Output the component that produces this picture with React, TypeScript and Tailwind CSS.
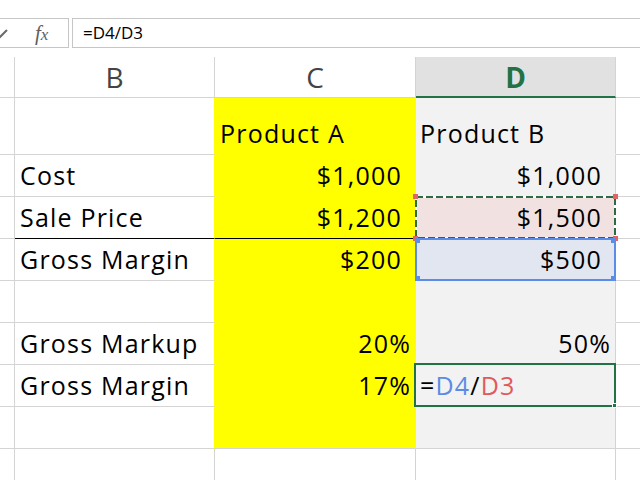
import React from "react";

type Mark = "ants" | "ref" | "active" | undefined;

type Row = {
  h?: string;
  b?: string;
  c?: string;
  d?: React.ReactNode;
  cLeft?: boolean;
  dLeft?: boolean;
  pct?: boolean;
  line?: boolean;
  dFill?: string;
  mark?: Mark;
  last?: boolean;
  blank?: boolean;
};

const rows: Row[] = [
  { h: "h-[57px]", c: "Product A", d: "Product B", cLeft: true, dLeft: true },
  { b: "Cost", c: "$1,000", d: "$1,000" },
  { b: "Sale Price", c: "$1,200", d: "$1,500", line: true, dFill: "bg-[#f1e2e1]", mark: "ants" },
  { b: "Gross Margin", c: "$200", d: "$500", dFill: "bg-[#e1e6f0]", mark: "ref" },
  {},
  { b: "Gross Markup", c: "20%", d: "50%", pct: true },
  {
    b: "Gross Margin",
    c: "17%",
    pct: true,
    dLeft: true,
    mark: "active",
    d: (
      <>
        =<span className="text-[#5b8be4]">D4</span>/<span className="text-[#e05a5c]">D3</span>
      </>
    ),
  },
  { last: true },
  { blank: true },
];

function Corners({ color }: { color: string }) {
  const sq = `absolute w-[5px] h-[5px] ${color}`;
  return (
    <>
      <span className={`${sq} -left-[2px] -top-[2px]`} />
      <span className={`${sq} -right-[2px] -top-[2px]`} />
      <span className={`${sq} -left-[2px] -bottom-[2px]`} />
      <span className={`${sq} -right-[2px] -bottom-[2px]`} />
    </>
  );
}

function Overlay({ mark }: { mark: Mark }) {
  if (mark === "ants") {
    return (
      <div className="absolute -left-px -top-px -right-px -bottom-px z-10 pointer-events-none">
        <svg className="absolute inset-0" width="100%" height="100%">
          <rect x="1" y="1" width="199" height="41" fill="none" stroke="#ffffff" strokeWidth="2" />
          <rect x="1" y="1" width="199" height="41" fill="none" stroke="#2e6b45" strokeWidth="2" strokeDasharray="7 3" />
        </svg>
        <Corners color="bg-[#e06666]" />
      </div>
    );
  }
  if (mark === "ref") {
    return (
      <div className="absolute -left-px -top-px -right-px -bottom-px z-10 pointer-events-none border-2 border-[#5b8de8]">
        <Corners color="bg-[#5b8de8]" />
      </div>
    );
  }
  if (mark === "active") {
    return (
      <div className="absolute -left-[2px] -top-[2px] -right-px -bottom-px z-10 pointer-events-none border-2 border-[#217346]">
        <span className="absolute -right-[3px] -bottom-[3px] w-[5px] h-[5px] bg-[#217346] border border-white" />
      </div>
    );
  }
  return null;
}

function DataRow({ r }: { r: Row }) {
  const h = r.h ?? "h-[42px]";
  const grid = "border-[#d4d4d4]";
  const white = r.blank;
  const cBottom = r.line ? "border-b-black" : r.last || white ? "border-b-[#d4d4d4]" : "border-b-[#ffff00]";
  const bBottom = r.line ? "border-b-black" : "border-b-[#d4d4d4]";
  const dBottom = r.last || white ? "border-b-[#d4d4d4]" : "border-b-[#f2f2f2]";
  const num = r.pct ? "pr-[4px]" : "pr-[13px]";
  return (
    <div className={`flex ${h}`}>
      <div className={`w-[15px] shrink-0 border-r border-b ${grid}`} />
      <div
        className={`w-[200px] shrink-0 border-b border-r ${bBottom} ${
          white ? "border-r-[#d4d4d4]" : "border-r-[#ffff00]"
        } flex items-end pl-[5px] pb-[4px]`}
      >
        {r.b}
      </div>
      <div
        className={`w-[201px] shrink-0 border-b border-r ${cBottom} ${
          white ? "bg-white border-r-[#d4d4d4]" : "bg-[#ffff00] border-r-[#ffff00]"
        } flex items-end pb-[4px] ${r.cLeft ? "pl-[5px]" : `justify-end ${num}`}`}
      >
        {r.c}
      </div>
      <div
        className={`relative w-[200px] shrink-0 border-b border-r border-r-[#d4d4d4] ${dBottom} ${
          white ? "bg-white" : r.dFill ?? "bg-[#f2f2f2]"
        } flex items-end pb-[4px] ${r.dLeft ? "pl-[4px]" : `justify-end ${num}`}`}
      >
        {r.d}
        <Overlay mark={r.mark} />
      </div>
      <div className={`flex-1 border-b ${grid}`} />
    </div>
  );
}

export default function App() {
  return (
    <div className="w-[640px] h-[480px] overflow-hidden bg-white text-black font-['Open_Sans',sans-serif]">
      <div className="h-[18px]" />
      <div className="flex h-[30px]">
        <div className="relative w-[69px] shrink-0 border border-l-0 border-[#c6c6c6]">
          <svg className="absolute -left-[6px] top-[9px]" width="14" height="12" viewBox="0 0 14 12">
            <path d="M1 6 L5 10 L13 2" fill="none" stroke="#6a6a6a" strokeWidth="2" />
          </svg>
          <span className="absolute left-[35px] top-[1px] font-['Liberation_Serif',serif] italic text-[21px] leading-[26px] text-[#5e5e5e]">
            f<span className="text-[17px]">x</span>
          </span>
        </div>
        <div className="w-[3px] shrink-0" />
        <div className="flex-1 border border-r-0 border-[#c6c6c6] pl-[10px] flex items-center text-[17px] leading-[24px]">
          =D4/D3
        </div>
      </div>
      <div className="h-[9px]" />
      <div className="flex h-[41px] text-[28px] text-[#444]">
        <div className="w-[15px] shrink-0 border-r border-b border-[#d4d4d4]" />
        <div className="w-[200px] shrink-0 border-r border-b border-[#d4d4d4] flex items-center justify-center">B</div>
        <div className="w-[201px] shrink-0 border-r border-b border-[#d4d4d4] flex items-center justify-center">C</div>
        <div className="w-[200px] shrink-0 bg-[#e1e1e1] border-r border-r-[#d4d4d4] border-b-2 border-b-[#217346] flex items-center justify-center font-bold text-[#217346]">
          D
        </div>
        <div className="flex-1 border-b border-[#d4d4d4]" />
      </div>
      <div className="text-[25px] leading-[34px] tracking-[1.2px] font-medium">
        {rows.map((r, i) => (
          <DataRow key={i} r={r} />
        ))}
      </div>
    </div>
  );
}
